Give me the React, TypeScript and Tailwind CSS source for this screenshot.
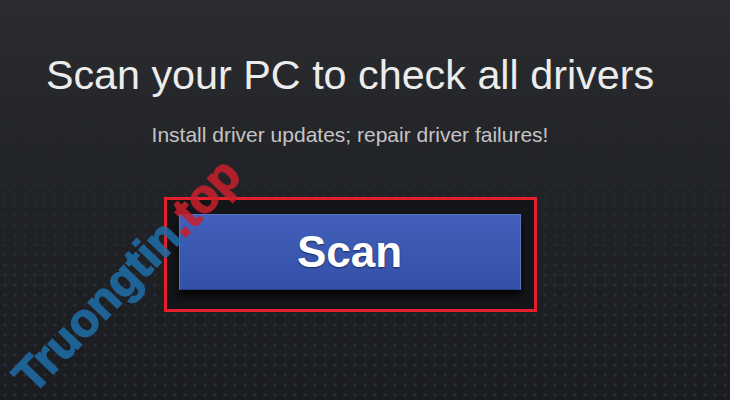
import React from "react";

export default function App() {
  return (
    <div
      className="relative w-[730px] h-[400px] overflow-hidden bg-[linear-gradient(180deg,#2b2c30_0%,#222327_45%,#1b1c20_100%)]"
      style={{ fontFamily: '"Liberation Sans", Arial, sans-serif' }}
    >
      <div className="absolute inset-0 opacity-70 bg-[radial-gradient(circle,#2c3142_1.4px,transparent_1.9px)] bg-[length:10px_10px] [mask-image:linear-gradient(180deg,transparent_15%,black_70%)]" />
      <div className="relative flex flex-col items-center pr-[30px] pt-[51px]">
        <h1 className="text-[41.3px] leading-[48px] text-[#ececec] font-normal whitespace-nowrap">
          Scan your PC to check all drivers
        </h1>
        <p className="mt-[24px] text-[21px] leading-[24px] text-[#c4c4c4] whitespace-nowrap">
          Install driver updates; repair driver failures!
        </p>
        <div className="mt-[50px] border-[3px] border-[#e3202b] bg-[#141518] w-[373px] h-[115px] pl-[12px] pt-[14px]">
          <div className="w-[342px] h-[76px] border border-[#5b74c6] border-b-[#2c3f86] bg-[linear-gradient(180deg,#4260ba_0%,#3450a8_100%)] shadow-[0_6px_8px_rgba(0,0,0,0.8)] flex items-center justify-center">
            <span className="text-white text-[44px] font-bold leading-none [text-shadow:0_1px_2px_rgba(0,0,0,0.5)]">
              Scan
            </span>
          </div>
        </div>
      </div>
      <div className="absolute left-[38px] top-[353px] h-[47px] origin-bottom-left -rotate-[46deg] text-[47px] font-bold leading-none whitespace-nowrap opacity-85">
        <span className="text-[#1f6ea8] [-webkit-text-stroke:1.5px_#1f6ea8]">Truongtin</span>
        <span className="text-[#c8202c] [-webkit-text-stroke:1.5px_#c8202c]">.top</span>
      </div>
    </div>
  );
}
